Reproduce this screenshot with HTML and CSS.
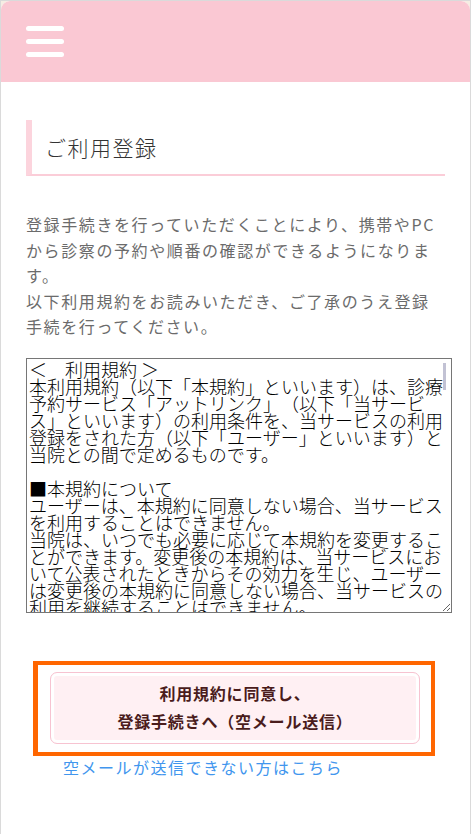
FILE: index.html
```html
<!DOCTYPE html>
<html lang="ja">
<head>
<meta charset="utf-8">
<title>ご利用登録</title>
<link rel="stylesheet" href="styles.css">
</head>
<body>
<div class="frame">
  <div class="page">
    <header class="topbar">
      <button class="menu-btn" type="button" aria-label="メニュー"><span></span><span></span><span></span></button>
    </header>
    <main class="content">
      <h1 class="title">ご利用登録</h1>
      <p class="lead">登録手続きを行っていただくことにより、携帯やPCから診察の予約や順番の確認ができるようになります。<br>以下利用規約をお読みいただき、ご了承のうえ登録手続を行ってください。</p>
      <div class="terms-wrap">
      <textarea class="terms" readonly>＜　利用規約 ＞
本利用規約（以下「本規約」といいます）は、診療予約サービス「アットリンク」（以下「当サービス」といいます）の利用条件を、当サービスの利用登録をされた方（以下「ユーザー」といいます）と当院との間で定めるものです。

■本規約について
ユーザーは、本規約に同意しない場合、当サービスを利用することはできません。
当院は、いつでも必要に応じて本規約を変更することができます。変更後の本規約は、当サービスにおいて公表されたときからその効力を生じ、ユーザーは変更後の本規約に同意しない場合、当サービスの利用を継続することはできません。

■利用登録について
当サービスの利用を希望する方は、本規約に同意のうえ、当院の定める方法により利用登録を行うものとします。
当院は、利用登録の申請者に以下の事由があると判断した場合、利用登録の申請を承認しないことがあります。その理由については一切の開示義務を負わないものとします。
・登録事項に虚偽の事実を申告した場合
・本規約に違反したことがある者からの申請である場合
・その他、当院が利用登録を相当でないと判断した場合

■メールアドレスおよびパスワードの管理
ユーザーは、自己の責任において、当サービスのメールアドレスおよびパスワードを適切に管理するものとします。
ユーザーは、いかなる場合にも、メールアドレスおよびパスワードを第三者に譲渡または貸与し、もしくは第三者と共用することはできません。

■予約について
ユーザーは、当サービスを通じて当院の診察の予約または順番の受付を行うことができます。
予約の時間は目安であり、診察の状況により前後する場合があります。あらかじめご了承ください。
予約の取り消しまたは変更を行う場合は、当サービス上の所定の手続きにより速やかに行うものとします。

■禁止事項
ユーザーは、当サービスの利用にあたり、以下の行為をしてはなりません。
・法令または公序良俗に違反する行為
・犯罪行為に関連する行為
・虚偽の情報を登録する行為
・当院の診療業務を妨害するおそれのある行為
・他のユーザーに成りすます行為
・当サービスの運営を妨害するおそれのある行為
・その他、当院が不適切と判断する行為

■当サービスの提供の停止等
当院は、以下のいずれかの事由があると判断した場合、ユーザーに事前に通知することなく当サービスの全部または一部の提供を停止または中断することができるものとします。
・当サービスにかかるコンピュータシステムの保守点検または更新を行う場合
・地震、落雷、火災、停電または天災などの不可抗力により、当サービスの提供が困難となった場合
・コンピュータまたは通信回線等が事故により停止した場合
・その他、当院が当サービスの提供が困難と判断した場合

■利用制限および登録抹消
当院は、ユーザーが本規約のいずれかの条項に違反した場合には、事前の通知なく、ユーザーに対して当サービスの全部もしくは一部の利用を制限し、またはユーザーとしての登録を抹消することができるものとします。

■免責事項
当院は、当サービスの提供の停止、中断または変更によりユーザーに生じた損害について、一切の責任を負わないものとします。
当院は、ユーザーが使用する携帯電話、パソコン等の機器および通信環境に起因する不具合について、一切の責任を負わないものとします。

■個人情報の取扱い
当院は、当サービスの利用によって取得する個人情報については、当院の定める個人情報保護方針に従い適切に取り扱うものとします。

■準拠法
本規約の解釈にあたっては、日本法を準拠法とします。

以上</textarea>
      <span class="scroll-thumb" aria-hidden="true"></span>
      </div>
      <div class="cta-frame">
        <a class="cta" href="#">利用規約に同意し、<br>登録手続きへ（空メール送信）</a>
      </div>
      <a class="alt-link" href="#">空メールが送信できない方はこちら</a>
    </main>
  </div>
</div>
</body>
</html>
```

FILE: styles.css
```css
html, body {
  margin: 0;
  padding: 0;
}

body {
  font-family: "Noto Sans CJK JP", "Noto Sans", sans-serif;
  background: #fff;
  text-spacing-trim: space-all;
}

.frame {
  box-sizing: border-box;
  min-height: 834px;
  border: 1px solid #dadada;
  border-bottom: none;
  background: #f6ede3;
}

.page {
  min-height: 833px;
  background: #fff;
  border-radius: 9px 9px 0 0;
  overflow: hidden;
}

.topbar {
  box-sizing: border-box;
  height: 81px;
  padding: 25px 0 0 25px;
  background: #fac8d3;
}

.menu-btn {
  display: flex;
  flex-direction: column;
  gap: 8px;
  width: 38px;
  margin: 0;
  padding: 0;
  border: none;
  background: transparent;
}

.menu-btn span {
  display: block;
  height: 5px;
  border-radius: 3px;
  background: #fff;
}

.content {
  padding: 38px 25px 0;
}

.title {
  margin: 0;
  padding: 12px 13px;
  border-left: 6px solid #fcd4dd;
  border-bottom: 2px solid #fbcdd8;
  font-size: 21px;
  line-height: 30px;
  font-weight: 300;
  letter-spacing: 1.5px;
  color: #333;
}

.lead {
  margin: 36px 0 18px;
  font-size: 16px;
  line-height: 25.5px;
  letter-spacing: 1.6px;
  color: #6b6b6b;
}

.terms-wrap {
  position: relative;
  width: calc(100% + 7px);
}

.terms {
  display: block;
  box-sizing: border-box;
  width: 100%;
  height: 255px;
  margin: 0;
  padding: 2px 8px 2px 2px;
  border: 1px solid #767676;
  border-radius: 0;
  background: #fff;
  font-family: "Noto Sans CJK JP", sans-serif;
  font-weight: 300;
  font-size: 18px;
  line-height: 17px;
  color: #000;
  overflow-y: scroll;
  text-spacing-trim: space-all;
}

.scroll-thumb {
  position: absolute;
  top: 5px;
  right: 6px;
  width: 3px;
  height: 27px;
  background: #c2c2d4;
}

.cta-frame {
  margin: 48px 10px 0 7px;
  padding: 7px 11px 8px 12px;
  border: 4px solid #ff6600;
  border-left-width: 5px;
}

.cta {
  display: block;
  padding: 6px 0 8px;
  border: 1px solid #f7c3d1;
  border-radius: 7px;
  box-shadow: inset 0 0 0 3px #fff;
  background: #fff0f3;
  text-align: center;
  font-size: 16px;
  font-weight: 700;
  line-height: 28px;
  letter-spacing: 0.8px;
  color: #4a1c1c;
  text-decoration: none;
}

.alt-link {
  display: block;
  padding-left: 37px;
  font-size: 16px;
  line-height: 22px;
  letter-spacing: 1.5px;
  color: #4196ee;
  text-decoration: none;
}
```
